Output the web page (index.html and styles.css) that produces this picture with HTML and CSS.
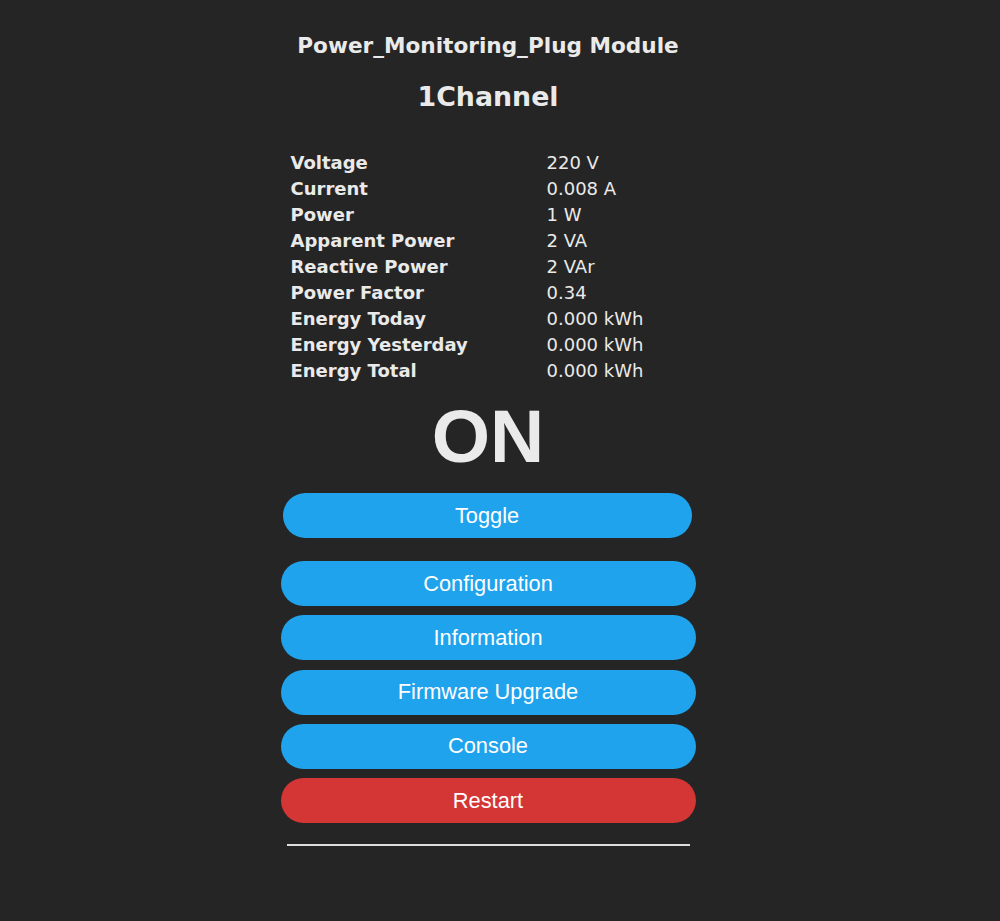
FILE: index.html
```html
<!DOCTYPE html>
<html>
<head>
<meta charset="utf-8">
<title>Power_Monitoring_Plug Module - 1Channel</title>
<link rel="stylesheet" href="styles.css">
</head>
<body>
<div class="page">
  <h3 class="module">Power_Monitoring_Plug Module</h3>
  <h2 class="device">1Channel</h2>
  <table class="sensors">
    <tr><th>Voltage</th><td>220 V</td></tr>
    <tr><th>Current</th><td>0.008 A</td></tr>
    <tr><th>Power</th><td>1 W</td></tr>
    <tr><th>Apparent Power</th><td>2 VA</td></tr>
    <tr><th>Reactive Power</th><td>2 VAr</td></tr>
    <tr><th>Power Factor</th><td>0.34</td></tr>
    <tr><th>Energy Today</th><td>0.000 kWh</td></tr>
    <tr><th>Energy Yesterday</th><td>0.000 kWh</td></tr>
    <tr><th>Energy Total</th><td>0.000 kWh</td></tr>
  </table>
  <div class="state">ON</div>
  <div class="toggle-wrap"><button class="btn">Toggle</button></div>
  <div class="menu">
    <button class="btn">Configuration</button>
    <button class="btn">Information</button>
    <button class="btn">Firmware Upgrade</button>
    <button class="btn">Console</button>
    <button class="btn btn-red">Restart</button>
  </div>
  <hr class="rule">
</div>
</body>
</html>
```
FILE: styles.css
```css
html, body {
  margin: 0;
  padding: 0;
  background: #252525;
  color: #eaeaea;
}
body {
  padding-right: 24px;
  font-family: "DejaVu Sans", Verdana, sans-serif;
}
.page {
  width: 415px;
  margin: 0 auto;
  text-align: center;
  padding-top: 33px;
}
.module {
  margin: 0;
  font-size: 21.6px;
  font-weight: bold;
  line-height: 26px;
}
.device {
  margin: 22px 0 0;
  font-size: 26.8px;
  font-weight: bold;
  line-height: 32px;
}
.sensors {
  margin: 37px auto 0 10px;
  border-collapse: collapse;
  text-align: left;
  font-size: 18px;
}
.sensors th, .sensors td {
  padding: 0;
  height: 26px;
  line-height: 26px;
  vertical-align: middle;
}
.sensors th {
  width: 256px;
  font-weight: bold;
}
.sensors td {
  font-weight: normal;
}
.state {
  margin-top: 12px;
  font-family: "Liberation Sans", Arial, sans-serif;
  font-weight: bold;
  font-size: 75px;
  line-height: 80px;
}
.toggle-wrap {
  padding: 0 4px 0 2px;
  margin-top: 17px;
}
.btn {
  display: block;
  width: 100%;
  height: 45px;
  border: 0;
  border-radius: 23px;
  background: #1fa3ec;
  color: #fff;
  font-family: "Liberation Sans", Arial, sans-serif;
  font-size: 21.8px;
  padding: 0;
  margin: 0;
}
.btn-red {
  background: #d43535;
}
.menu {
  margin-top: 23px;
  display: flex;
  flex-direction: column;
  gap: 9.25px;
}
.rule {
  margin: 21px 6px 0;
  border: 0;
  height: 2px;
  background: #dddddd;
}
```
